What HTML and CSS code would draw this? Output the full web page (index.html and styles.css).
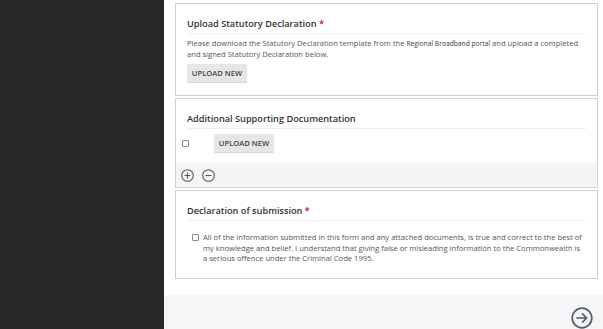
FILE: index.html
```html
<!DOCTYPE html>
<html lang="en">
<head>
  <meta charset="UTF-8">
  <title>Statutory Declaration</title>
  <link rel="stylesheet" href="styles.css">
</head>
<body>

<aside class="sidebar"></aside>

<main class="content">
  <section class="card">
    <div class="card-body">
      <h3 class="card-title">Upload Statutory Declaration <span class="req">*</span></h3>
      <p class="note">Please download the Statutory Declaration template from the <span class="portal">Regional Broadband portal</span> and upload a completed and signed Statutory Declaration below.</p>
      <button class="btn">UPLOAD NEW</button>
    </div>
  </section>

  <section class="card">
    <div class="card-body">
      <h3 class="card-title">Additional Supporting Documentation</h3>
    </div>
    <div class="doc-row">
      <input type="checkbox" class="check">
      <button class="btn">UPLOAD NEW</button>
    </div>
    <div class="row-tools">
      <svg class="tool" width="13" height="13" viewBox="0 0 13 13">
        <circle cx="6.5" cy="6.5" r="5.8" fill="none" stroke="#555" stroke-width="1.1"/>
        <path d="M6.5 3.6v5.8M3.6 6.5h5.8" stroke="#555" stroke-width="1.1"/>
      </svg>
      <svg class="tool" width="13" height="13" viewBox="0 0 13 13">
        <circle cx="6.5" cy="6.5" r="5.8" fill="none" stroke="#555" stroke-width="1.1"/>
        <path d="M3.6 6.5h5.8" stroke="#555" stroke-width="1.1"/>
      </svg>
    </div>
  </section>

  <section class="card">
    <div class="card-body card-body-tall">
      <h3 class="card-title">Declaration of submission <span class="req">*</span></h3>
      <label class="declare">
        <input type="checkbox" class="check">
        <span>All of the information submitted in this form and any attached documents, is true and correct to the best of my knowledge and belief. I understand that giving false or misleading information to the Commonwealth is a serious offence under the Criminal Code 1995.</span>
      </label>
    </div>
  </section>

  <footer class="page-foot">
    <svg width="22" height="22" viewBox="0 0 22 22">
      <circle cx="11" cy="11" r="9.8" fill="none" stroke="#5a5d66" stroke-width="1.7"/>
      <path d="M6 11h9.5M11.5 6.8l4.2 4.2-4.2 4.2" fill="none" stroke="#5a5d66" stroke-width="1.7" stroke-linecap="round" stroke-linejoin="round"/>
    </svg>
  </footer>
</main>

</body>
</html>
```
FILE: styles.css
```css
body {
  margin: 0;
  height: 100vh;
  display: flex;
  font-family: 'Open Sans', sans-serif;
  color: #555;
  background: #fff;
  overflow: hidden;
}
.sidebar {
  width: 164px;
  flex-shrink: 0;
  background: #282828;
}
.content {
  flex: 1;
  display: flex;
  flex-direction: column;
  padding-top: 3px;
}
.card {
  margin: 0 5px 2px 11px;
  border: 1px solid #cfcfcf;
  background: #fff;
}
.card-body {
  padding: 14px 11px 13px 11px;
}
.card-body-tall {
  padding-bottom: 14px;
}
.card-title {
  margin: 0;
  padding-bottom: 3px;
  border-bottom: 1px solid #efefef;
  font-size: 9.2px;
  line-height: 12px;
  font-weight: 600;
  color: #333;
}
.req {
  color: #d0021b;
}
.note {
  margin: 4px 0 5px;
  font-size: 7.6px;
  line-height: 10.5px;
}
.portal {
  font-size: 6.7px;
  line-height: 1;
  color: #3a3a3a;
}
.btn {
  display: block;
  width: 60px;
  height: 18px;
  padding: 0;
  border: none;
  border-radius: 1px;
  background: #e6e6e6;
  box-shadow: 0 1px 0 #d6d6d6;
  font-family: 'Open Sans', sans-serif;
  font-size: 7.6px;
  font-weight: 600;
  color: #444;
}
.check {
  -webkit-appearance: none;
  appearance: none;
  width: 7px;
  height: 7px;
  margin: 0;
  border: 1px solid #8a8a8a;
  border-radius: 1px;
  background: #fff;
  flex-shrink: 0;
}
.doc-row {
  display: flex;
  align-items: center;
  gap: 25px;
  margin-top: -8px;
  padding: 0 6px 11px;
}
.row-tools {
  display: flex;
  align-items: center;
  gap: 8px;
  height: 24px;
  padding-left: 5px;
  background: #f4f5f7;
}
.tool {
  display: block;
}
.declare {
  display: flex;
  gap: 4px;
  margin: 11px 0 0 5px;
  font-size: 7.6px;
  line-height: 10.5px;
}
.declare .check {
  margin-top: 2px;
}
.page-foot {
  margin-top: 14px;
  flex: 1;
  display: flex;
  justify-content: flex-end;
  align-items: flex-start;
  padding: 12px 10px 0 0;
  background: #f4f6f8;
}
.page-foot svg {
  display: block;
}
```
